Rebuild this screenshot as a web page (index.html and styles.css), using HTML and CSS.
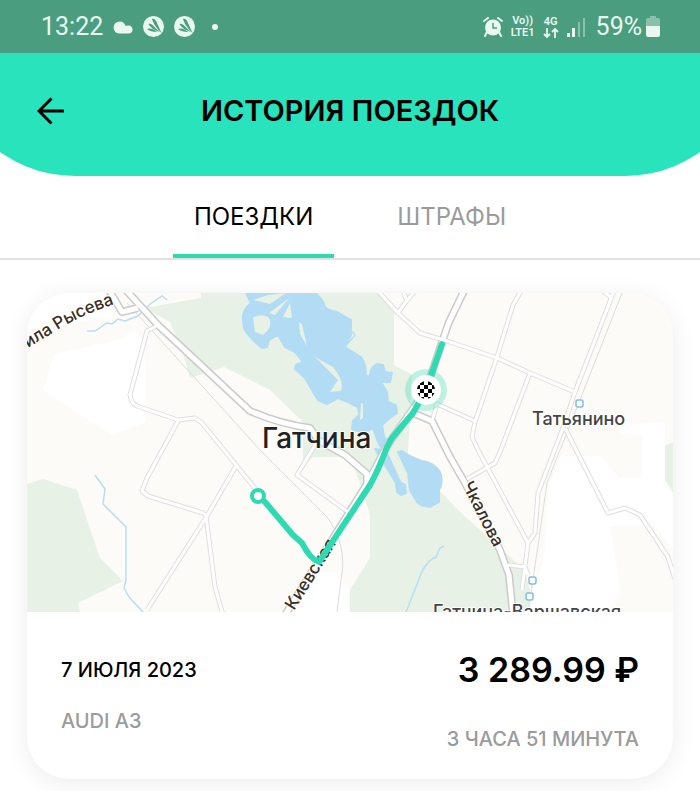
FILE: index.html
```html
<!DOCTYPE html>
<html lang="ru">
<head>
  <meta charset="UTF-8">
  <meta name="viewport" content="width=device-width, initial-scale=1.0">
  <title>История поездок</title>
  <link rel="stylesheet" href="styles.css">
</head>
<body>
  <div class="status-bar">
    <div class="status-group">
      <span class="clock">13:22</span>
      <svg class="icon-cloud" width="20" height="14" viewBox="0 0 20 14"><path d="M6 13.500A6 6 0 1 1 12.300 5.500Q13 6 15 5.500A4 4 0 0 1 16 13.500z"/></svg>
      <svg class="icon-app" width="21" height="21" viewBox="0 0 21 21"><circle cx="10.500" cy="10.500" r="10.500"/><path class="cut" d="M9 3c2-1 4 1 5 4l4.500 10C14 13 10 7 9 3zM5.500 8c2-1 4 1 5 2l6 6C11 14 7 11 5.500 8zM4 13c2-1.500 8 .5 10 3-4 0-8-1-10-3z"/></svg>
      <svg class="icon-app" width="21" height="21" viewBox="0 0 21 21"><circle cx="10.500" cy="10.500" r="10.500"/><path class="cut" d="M9 3c2-1 4 1 5 4l4.500 10C14 13 10 7 9 3zM5.500 8c2-1 4 1 5 2l6 6C11 14 7 11 5.500 8zM4 13c2-1.500 8 .5 10 3-4 0-8-1-10-3z"/></svg>
      <span class="dot"></span>
    </div>
    <div class="status-group status-right">
      <svg width="20" height="20" viewBox="0 0 20 20"><path d="M4 15l-2 4M16 15l2 4M1 4l4-3M19 4l-4-3" fill="none" stroke="#e9f8f1" stroke-width="2" stroke-linecap="round"/><circle cx="10" cy="10.500" r="8"/><path class="line" d="M10 6v5h4"/></svg>
      <div class="net"><span>Vo))</span><span>LTE1</span></div>
      <div class="net">
        <span>4G</span>
        <svg width="16" height="10" viewBox="0 0 16 10"><path d="M4 0v9M1 6l3 3 3-3M12 10V1M9 4l3-3 3 3" fill="none" stroke="#e9f8f1" stroke-width="1.800"/></svg>
      </div>
      <svg class="signal" width="19" height="20" viewBox="0 0 19 20"><path d="M0 16h3v4H0zM5 11h3v9H5z"/><path class="dim" d="M11 5h2v15h-2zM16 1h2v19h-2z"/></svg>
      <span class="percent">59%</span>
      <svg width="14" height="21" viewBox="0 0 14 21"><path class="dim" d="M4 0h6v2h2q2 0 2 2v6H0V4q0-2 2-2h2z"/><path d="M0 10h14v9q0 2-2 2H2q-2 0-2-2z"/></svg>
    </div>
  </div>

  <header class="header">
    <button class="back" type="button" aria-label="Назад">
      <svg width="28" height="28" viewBox="0 0 28 28"><path d="M27 14H2M14.500 1.500L2 14l12.500 12.500"/></svg>
    </button>
    <h1>ИСТОРИЯ ПОЕЗДОК</h1>
  </header>

  <nav class="tabs">
    <a class="tab active" href="#trips">ПОЕЗДКИ</a>
    <a class="tab" href="#fines">ШТРАФЫ</a>
  </nav>

  <main id="trips">
    <article class="card">
      <svg class="map" viewBox="27 293 646 319">
        <defs>
          <g id="minor">
            <path d="M158 325L147 331 130 395Q131 403 137 406L178 420 195 418 202 423 258 492"/>
            <path d="M178 421L147 478 142 491 148 496 203 513 207 516M236 466L207 516 147 610M206 516L215 587 223 615"/>
            <path d="M318 440L297 475 348 512"/>
            <path d="M378 291L398 313 420 333 450 342 497 358 530 373 575 392M398 313L405 303 415 291M407 301L403 291"/>
            <path d="M521 291L513 305 497 357 475 422 472 437 478 450 528 543M432 421L437 404 475 421"/>
            <path d="M530 373L500 452 495 463 467 479M603 291L612 298"/>
            <path d="M614 291L575 392 563 428 538 493 535 533 528 543 522 590M565 428L608 513 625 508 640 515 668 557 675 579M508 565L525 567 528 575"/>
          </g>
          <g id="major">
            <path d="M124 288L158 325 250 411Q280 424 310 428L318 440 345 455 367 474V484"/>
            <path d="M109 290L122 312 138 308"/>
            <path d="M464 291L449 322 441 345 426 390 387 446 367 484 318 562 285 615"/>
            <path d="M413 413L432 421 450 457 465 483 500 550 509 575 513 615"/>
          </g>
        </defs>
        <rect class="land" x="27" y="293" width="646" height="319"/>
        <g class="block">
          <path d="M27 293H110L112 318 70 322 27 330zM54 354L100 344 117 340 134 331 140 336 146 365V422L112 435 43 390z"/>
          <path d="M620 425L665 422V480L673 493V550L655 526H610L621 593 605 612H530L545 550 548 490 560 456H600L620 478H642V435L620 433z"/>
          <path d="M318 572H335L349 590V612H285z"/>
        </g>
        <g class="park">
          <path d="M201 293H380L394 311V365L412 375 408 452V484L440 491 459 511 500 548 524 570 530 590 528 612H350V590L370 558V515L357 475 350 457H313L303 467V422L270 390 224 367 190 378 182 350 170 322 145 308 201 298z"/>
          <path d="M27 484L43 479 77 490 100 558 123 581 78 603 80 612H27zM673 442L665 446V480L673 493z"/>
        </g>
        <path class="water" d="M246 293L251 303Q242 310 243 320 243 329 247 333L253 340 262 348 267 347 269 340 278 335 285 347 295 352 303 362 296 365 295 369 305 378 313 392 318 400 327 404 338 398 348 402 358 407 359 415 353 421 352 429 363 433 373 428 378 442 385 455 392 443 384 437 382 425 390 418 397 413 396 405 388 402 387 392 381 382 390 382 392 373 385 372 383 365 377 364 372 368 369 377 366 375Q366 364 361 357L345 347 351 335 351 320 337 312Q329 311 325 307 323 299 315 293z"/>
        <path class="water" d="M375 449L396 483 397 492 401 495 406 493 405 485 400 482 386 451zM398 452L402 451Q415 460 427 462 439 467 441 475 443 483 439 490V502L430 507Q421 506 417 502L410 490 408 473z"/>
        <path class="island" d="M253 318Q260 313 268 317 273 322 268 330L263 335 255 332zM290 303L292 318 283 317zM269 313L289 298 275 315zM299 322L302 324 307 346 300 334zM315 357L333 367Q341 377 342 385L341 391 330 392 338 380zM361 403L363 404V418L360 420zM253 300L268 295 286 293 270 304z"/>
        <g class="stream">
          <path d="M95 475L105 489 103 504 126 527V580L124 588 129 597 143 612"/>
          <path d="M87 331L95 331 107 323 112 324 118 319 125 321 138 316 150 304 162 296 167 300"/>
          <path d="M406 612L418 582 Q424 562 436 557L440 548 444 546M350 329L355 335 346 346"/>
        </g>
        <g class="rail">
          <path d="M127 303L260 450 327 517Q348 545 341 580L337 612"/>
          <path d="M622 293L580 400 558 455 547 483 533 580 528 612"/>
        </g>
        <use class="minor-edge" href="#minor"/>
        <use class="major-edge" href="#major"/>
        <use class="minor-fill" href="#minor"/>
        <use class="major-fill" href="#major"/>
        <g class="station">
          <rect x="576" y="400" width="7" height="7" rx="2"/>
          <rect x="529" y="577" width="7" height="7" rx="2"/>
          <rect x="526" y="593" width="7" height="7" rx="2"/>
        </g>
        <path id="ryseva" d="M28 348L62 327Q90 311 130 299" fill="none"/>
        <text class="street"><textPath href="#ryseva">ила Рысева</textPath></text>
        <text class="street" transform="translate(294 611) rotate(-58)">Киевская</text>
        <text class="street" transform="translate(462 485) rotate(63)">Чкалова</text>
        <text class="city" x="262" y="448">Гатчина</text>
        <text class="town" x="532" y="425">Татьянино</text>
        <text class="town" x="433" y="618">Гатчина-Варшавская</text>
        <circle class="halo" cx="426" cy="390" r="21"/>
        <path class="route" d="M258 496L265 502 293 535 302 543 Q310 559 319 562L370 485Q378 471 387 447L392 438 413 413 426 390 442 344"/>
        <circle class="start" cx="258" cy="496" r="6"/>
        <circle class="finish" cx="426" cy="390" r="15"/>
        <clipPath id="flag"><circle cx="426" cy="390" r="9"/></clipPath>
        <path clip-path="url(#flag)" d="M420 381h4v4h-4zM428 381h4v4h-4zM416 385h4v4h-4zM424 385h4v4h-4zM432 385h4v4h-4zM420 389h4v4h-4zM428 389h4v4h-4zM416 393h4v4h-4zM424 393h4v4h-4zM432 393h4v4h-4zM420 397h4v4h-4zM428 397h4v4h-4z"/>
      </svg>
      <div class="info">
        <div class="trip">
          <span class="date">7 ИЮЛЯ 2023</span>
          <span class="muted">AUDI A3</span>
        </div>
        <div class="cost">
          <strong class="price">3 289.99 ₽</strong>
          <span class="muted">3 ЧАСА 51 МИНУТА</span>
        </div>
      </div>
    </article>
  </main>
</body>
</html>
```
FILE: styles.css
```css
:root {
  --mint: #29e3bc;
  --route: #2fdab3;
  --status: #4a9d7e;
  --status-text: #e9f8f1;
  --muted: #9b9b9b;
}
* { box-sizing: border-box; }
body {
  margin: 0;
  font-family: Inter, "Liberation Sans", sans-serif;
  background: #fff;
  color: #000;
}

/* Status bar */
.status-bar {
  display: flex;
  justify-content: space-between;
  align-items: center;
  height: 53px;
  padding: 0 40px 0 41px;
  background: var(--status);
  color: var(--status-text);
  font-family: Roboto, sans-serif;
}
.status-bar svg { fill: var(--status-text); }
.status-bar .dim { opacity: 0.4; }
.status-bar .cut { fill: var(--status); }
.status-bar .line { fill: none; stroke: var(--status); stroke-width: 1.5; }
.status-group { display: flex; align-items: center; gap: 10px; }
.clock, .percent { font-size: 25px; line-height: 32px; }
.dot { width: 6px; height: 6px; margin-left: 7px; border-radius: 50%; background: var(--status-text); }
.status-right { gap: 8px; }
.percent { margin: 0 -4px 0 2px; }
.net {
  display: flex; flex-direction: column; align-items: center; gap: 1px;
  font-size: 11px; line-height: 11px; font-weight: 600;
}

/* The bottom corners curve past the side edges */
.header {
  display: grid;
  grid-template-columns: 56px 1fr 56px;
  align-items: center;
  height: 123px;
  padding: 0 30px 7px;
  clip-path: inset(-10px -54px 0 round 0 0 129px 129px);
  background: var(--mint);
}
.header h1 { margin: 0; font-size: 29px; line-height: 36px; font-weight: 600; text-align: center; }
.back { display: flex; padding: 7px; border: 0; background: none; cursor: pointer; }
.back svg { fill: none; stroke: #000; stroke-width: 3; }

.tabs {
  display: flex;
  justify-content: center;
  gap: 42px;
  border-bottom: 2px solid #e1e1e1;
}
.tab {
  padding: 25px 21px 21px;
  border-bottom: 4px solid transparent;
  color: var(--muted);
  font-size: 24px;
  line-height: 32px;
  text-decoration: none;
}
.tab.active {
  color: #000;
  background: linear-gradient(var(--route), var(--route)) bottom / 100% 4px no-repeat border-box;
}

/* Trip card */
main { padding: 33px 27px 12px; }
.card {
  overflow: hidden;
  border-radius: 42px;
  background: #fff;
  box-shadow: 0 4px 24px rgba(0, 0, 0, 0.08);
}
.info { display: flex; justify-content: space-between; padding: 38px 34px 28px; }
.trip, .cost { display: flex; flex-direction: column; }
.trip { gap: 11px; line-height: 40px; }
.cost { gap: 37px; align-items: flex-end; line-height: 24px; }
.date { font-size: 20px; font-weight: 500; }
.price { font-size: 34px; line-height: 40px; font-weight: 600; }
.muted { color: var(--muted); font-size: 20px; font-weight: 500; }

/* Map */
.map { display: block; width: 100%; height: auto; }
.land { fill: #fcfbf7; }
.block { fill: #fff; }
.park, .island { fill: #e7f1e5; }
.water { fill: #b2dcf3; stroke: #b2dcf3; stroke-width: 2; stroke-linejoin: round; }
.stream { fill: none; stroke: #b9def2; stroke-width: 1.5; }
.rail { fill: none; stroke: #dcdcdc; stroke-width: 1; }
.minor-edge, .minor-fill, .major-edge, .major-fill { fill: none; stroke: #fff; stroke-linejoin: round; }
.minor-edge { stroke: #dfdfdf; stroke-width: 5; }
.minor-fill { stroke-width: 3; }
.major-edge { stroke: #cbcbcb; stroke-width: 8; }
.major-fill { stroke-width: 5; }
.station { fill: #fff; stroke: #82bfe2; stroke-width: 1.5; }
.map text { paint-order: stroke; stroke: #fff; stroke-width: 2; stroke-linejoin: round; font-weight: 500; }
.street { font-size: 17px; fill: #3a2d22; }
.city { font-size: 28px; fill: #222; }
.town { font-size: 18px; fill: #454545; }
.route { fill: none; stroke: var(--route); stroke-width: 6; stroke-linecap: round; stroke-linejoin: round; }
.start { fill: #fff; stroke: var(--route); stroke-width: 4; }
.halo { fill: var(--route); opacity: 0.3; }
.finish { fill: #fff; }
```
